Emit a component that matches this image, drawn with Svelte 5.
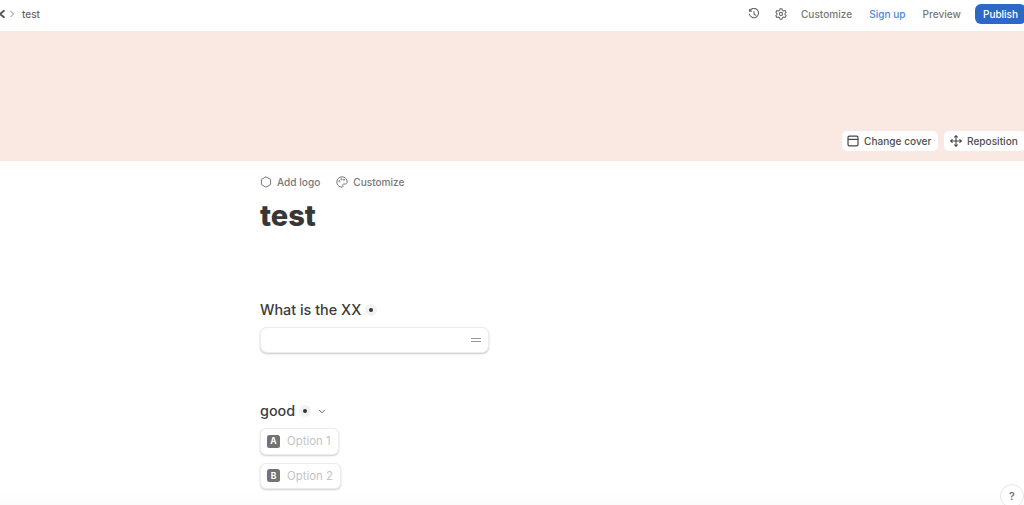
<script>
  const options = [
    { key: 'A', label: 'Option 1' },
    { key: 'B', label: 'Option 2' }
  ];
</script>

<div class="page">
  <header class="topbar">
    <nav class="crumbs">
      <svg class="logo" width="12" height="12" viewBox="0 0 12 12" fill="none" stroke="#555" stroke-width="1.8" stroke-linecap="round">
        <path d="M2 6 H7 M7 6 L11 2.8 M7 6 L11 9.2" />
      </svg>
      <svg class="chev" width="6" height="8" viewBox="0 0 6 8" fill="none" stroke="#888" stroke-width="1">
        <path d="M1.5 1 L4.5 4 L1.5 7" />
      </svg>
      <span class="crumb">test</span>
    </nav>
    <div class="actions">
      <svg class="ic-history" width="12" height="12" viewBox="0 0 14 14" fill="none" stroke="#666" stroke-width="1.3" stroke-linecap="round" stroke-linejoin="round">
        <path d="M2.2 3.2 A5.4 5.4 0 1 1 1.6 7" />
        <path d="M1.8 1.4 V3.6 H4" />
        <path d="M7 4.2 V7.2 L9 8.4" />
      </svg>
      <svg class="ic-gear" width="12" height="12" viewBox="0 0 14 14" fill="none" stroke="#666" stroke-width="1.2" stroke-linejoin="round">
        <path d="M5.8 1 H8.2 L8.6 2.7 L10.1 3.5 L11.8 3 L13 5 L11.7 6.2 V7.8 L13 9 L11.8 11 L10.1 10.5 L8.6 11.3 L8.2 13 H5.8 L5.4 11.3 L3.9 10.5 L2.2 11 L1 9 L2.3 7.8 V6.2 L1 5 L2.2 3 L3.9 3.5 L5.4 2.7 Z" />
        <circle cx="7" cy="7" r="1.9" />
      </svg>
      <span class="link customize">Customize</span>
      <span class="link signup">Sign up</span>
      <span class="link preview">Preview</span>
      <button class="publish">Publish</button>
    </div>
  </header>

  <section class="cover">
    <button class="cover-btn change">
      <svg width="12" height="12" viewBox="0 0 12 12" fill="none" stroke="#444" stroke-width="1.2">
        <rect x="1" y="1.2" width="10" height="9.6" rx="1.4" />
        <path d="M1 4.4 H11" />
      </svg>
      Change cover
    </button>
    <button class="cover-btn reposition">
      <svg width="12" height="12" viewBox="0 0 12 12" fill="none" stroke="#444" stroke-width="1.1" stroke-linecap="round" stroke-linejoin="round">
        <path d="M6 .8 V11.2 M.8 6 H11.2" />
        <path d="M4.6 2.2 L6 .8 L7.4 2.2 M4.6 9.8 L6 11.2 L7.4 9.8 M2.2 4.6 L.8 6 L2.2 7.4 M9.8 4.6 L11.2 6 L9.8 7.4" />
      </svg>
      Reposition
    </button>
  </section>

  <main class="content">
    <div class="tools">
      <span class="tool">
        <svg width="12" height="12" viewBox="0 0 12 12" fill="none" stroke="#777" stroke-width="1">
          <path d="M6 .8 L10.6 3.4 V8.6 L6 11.2 L1.4 8.6 V3.4 Z" stroke-linejoin="round" />
        </svg>
        Add logo
      </span>
      <span class="tool">
        <svg width="12" height="12" viewBox="0 0 12 12" fill="none" stroke="#777" stroke-width="1">
          <path d="M6 .8 A5.2 5.2 0 1 0 6 11.2 C7 11.2 7.2 10.4 6.8 9.8 C6.3 9 6.8 8 7.8 8 H9.4 C10.6 8 11.2 7 11.2 6 C11.2 3 8.8 .8 6 .8 Z" />
          <circle cx="3.4" cy="5.2" r=".6" />
          <circle cx="5.4" cy="3.2" r=".6" />
          <circle cx="8" cy="3.8" r=".6" />
        </svg>
        Customize
      </span>
    </div>

    <h1>test</h1>

    <div class="q first">
      <h2>What is the XX<span class="req"></span></h2>
      <div class="input">
        <span class="lines"></span>
      </div>
    </div>

    <div class="q second">
      <h2>good<span class="req"></span>
        <svg class="caret" width="8" height="5" viewBox="0 0 8 5" fill="none" stroke="#666" stroke-width="1">
          <path d="M1 .8 L4 3.8 L7 .8" />
        </svg>
      </h2>
      <div class="opts">
        {#each options as o}
          <div class="opt">
            <span class="key">{o.key}</span>
            <span class="lab">{o.label}</span>
          </div>
        {/each}
      </div>
    </div>
  </main>

  <div class="fade"></div>
  <button class="help">?</button>
</div>

<style>
  :global(body) {
    margin: 0;
    background: #fff;
  }
  .page {
    position: relative;
    width: 1024px;
    height: 505px;
    overflow: hidden;
    font-family: Inter, "Liberation Sans", sans-serif;
    color: #37352f;
  }
  button {
    font-family: inherit;
    border: none;
    padding: 0;
  }
  .topbar {
    height: 31px;
    padding-bottom: 4px;
    box-sizing: border-box;
    display: flex;
    align-items: center;
    justify-content: space-between;
    background: #fff;
  }
  .crumbs {
    display: flex;
    align-items: center;
    margin-left: -7px;
  }
  .chev {
    margin-left: 4px;
  }
  .crumb {
    margin-left: 7px;
    font-size: 10px;
    font-weight: 550;
    color: #666;
  }
  .actions {
    display: flex;
    align-items: center;
    margin-right: -2px;
  }
  .ic-gear {
    margin-left: 15px;
  }
  .link {
    font-size: 10.1px;
    font-weight: 550;
    color: #777;
  }
  .customize {
    margin-left: 14px;
  }
  .signup {
    margin-left: 17px;
    color: #4a86d8;
  }
  .preview {
    margin-left: 17px;
  }
  .publish {
    margin-left: 14px;
    width: 51px;
    height: 20px;
    border-radius: 6px;
    background: #2d68c8;
    color: #fff;
    font-size: 10px;
    font-weight: 550;
  }
  .cover {
    height: 130px;
    background: #fae9e3;
    display: flex;
    align-items: flex-end;
    justify-content: flex-end;
    gap: 6px;
    padding-bottom: 10px;
    box-sizing: border-box;
    margin-right: -2px;
  }
  .cover-btn {
    height: 20px;
    background: #fff;
    border-radius: 5px;
    display: flex;
    align-items: center;
    gap: 5px;
    font-size: 10.1px;
    font-weight: 550;
    color: #505050;
  }
  .change {
    width: 96px;
    padding-left: 5px;
  }
  .reposition {
    width: 82px;
    padding-left: 6px;
  }
  .content {
    width: 230px;
    margin-left: 260px;
  }
  .tools {
    display: flex;
    gap: 16px;
    padding-top: 14px;
    height: 13px;
    align-items: center;
  }
  .tool {
    display: flex;
    align-items: center;
    gap: 5px;
    font-size: 10.1px;
    font-weight: 550;
    color: #777;
  }
  h1 {
    margin: 10px 0 0;
    font-size: 29px;
    line-height: 36px;
    font-weight: 800;
    color: #373737;
  }
  h2 {
    margin: 0;
    display: flex;
    align-items: center;
    font-size: 14.4px;
    line-height: 18px;
    font-weight: 550;
    color: #3c3c3c;
  }
  .first {
    margin-top: 67px;
  }
  .req {
    width: 12px;
    height: 12px;
    border-radius: 50%;
    background: #f1f1f0;
    position: relative;
    margin-left: 4px;
  }
  .req::after {
    content: "";
    position: absolute;
    left: 4px;
    top: 4px;
    width: 4px;
    height: 4px;
    border-radius: 50%;
    background: #37352f;
  }
  .input {
    margin-top: 8px;
    height: 26px;
    border-radius: 7px;
    background: #fff;
    border: 1px solid #ececec;
    box-shadow: 0 1px 2px rgba(0, 0, 0, 0.22);
    box-sizing: border-box;
    display: flex;
    align-items: center;
    justify-content: flex-end;
    padding-right: 7px;
    width: 229px;
  }
  .lines {
    width: 10px;
    height: 2px;
    border-top: 1px solid #999;
    border-bottom: 1px solid #999;
  }
  .second {
    margin-top: 49px;
  }
  .caret {
    margin-left: 7px;
  }
  .opts {
    margin-top: 8px;
    display: flex;
    flex-direction: column;
    align-items: flex-start;
    gap: 8px;
  }
  .opt {
    height: 26.5px;
    box-sizing: border-box;
    display: flex;
    align-items: center;
    gap: 7px;
    padding: 0 7px 0 6px;
    border: 1px solid #ececec;
    border-radius: 6px;
    background: #fff;
    box-shadow: 0 1px 2px rgba(0, 0, 0, 0.2);
  }
  .key {
    width: 13px;
    height: 13px;
    border-radius: 2.5px;
    background: #737373;
    color: #fff;
    font-size: 8.5px;
    font-weight: 700;
    display: flex;
    align-items: center;
    justify-content: center;
  }
  .lab {
    font-size: 11.4px;
    color: #c4c4c4;
  }
  .fade {
    position: absolute;
    left: 0;
    right: 0;
    bottom: 0;
    height: 14px;
    background: linear-gradient(rgba(248, 248, 248, 0), rgba(248, 248, 248, 0.6));
    pointer-events: none;
  }
  .help {
    position: absolute;
    left: 1000px;
    top: 484px;
    width: 24px;
    height: 24px;
    border-radius: 50%;
    background: #fff;
    border: 1px solid #e6e6e6;
    box-sizing: border-box;
    font-size: 11px;
    font-weight: 500;
    color: #666;
  }
</style>
